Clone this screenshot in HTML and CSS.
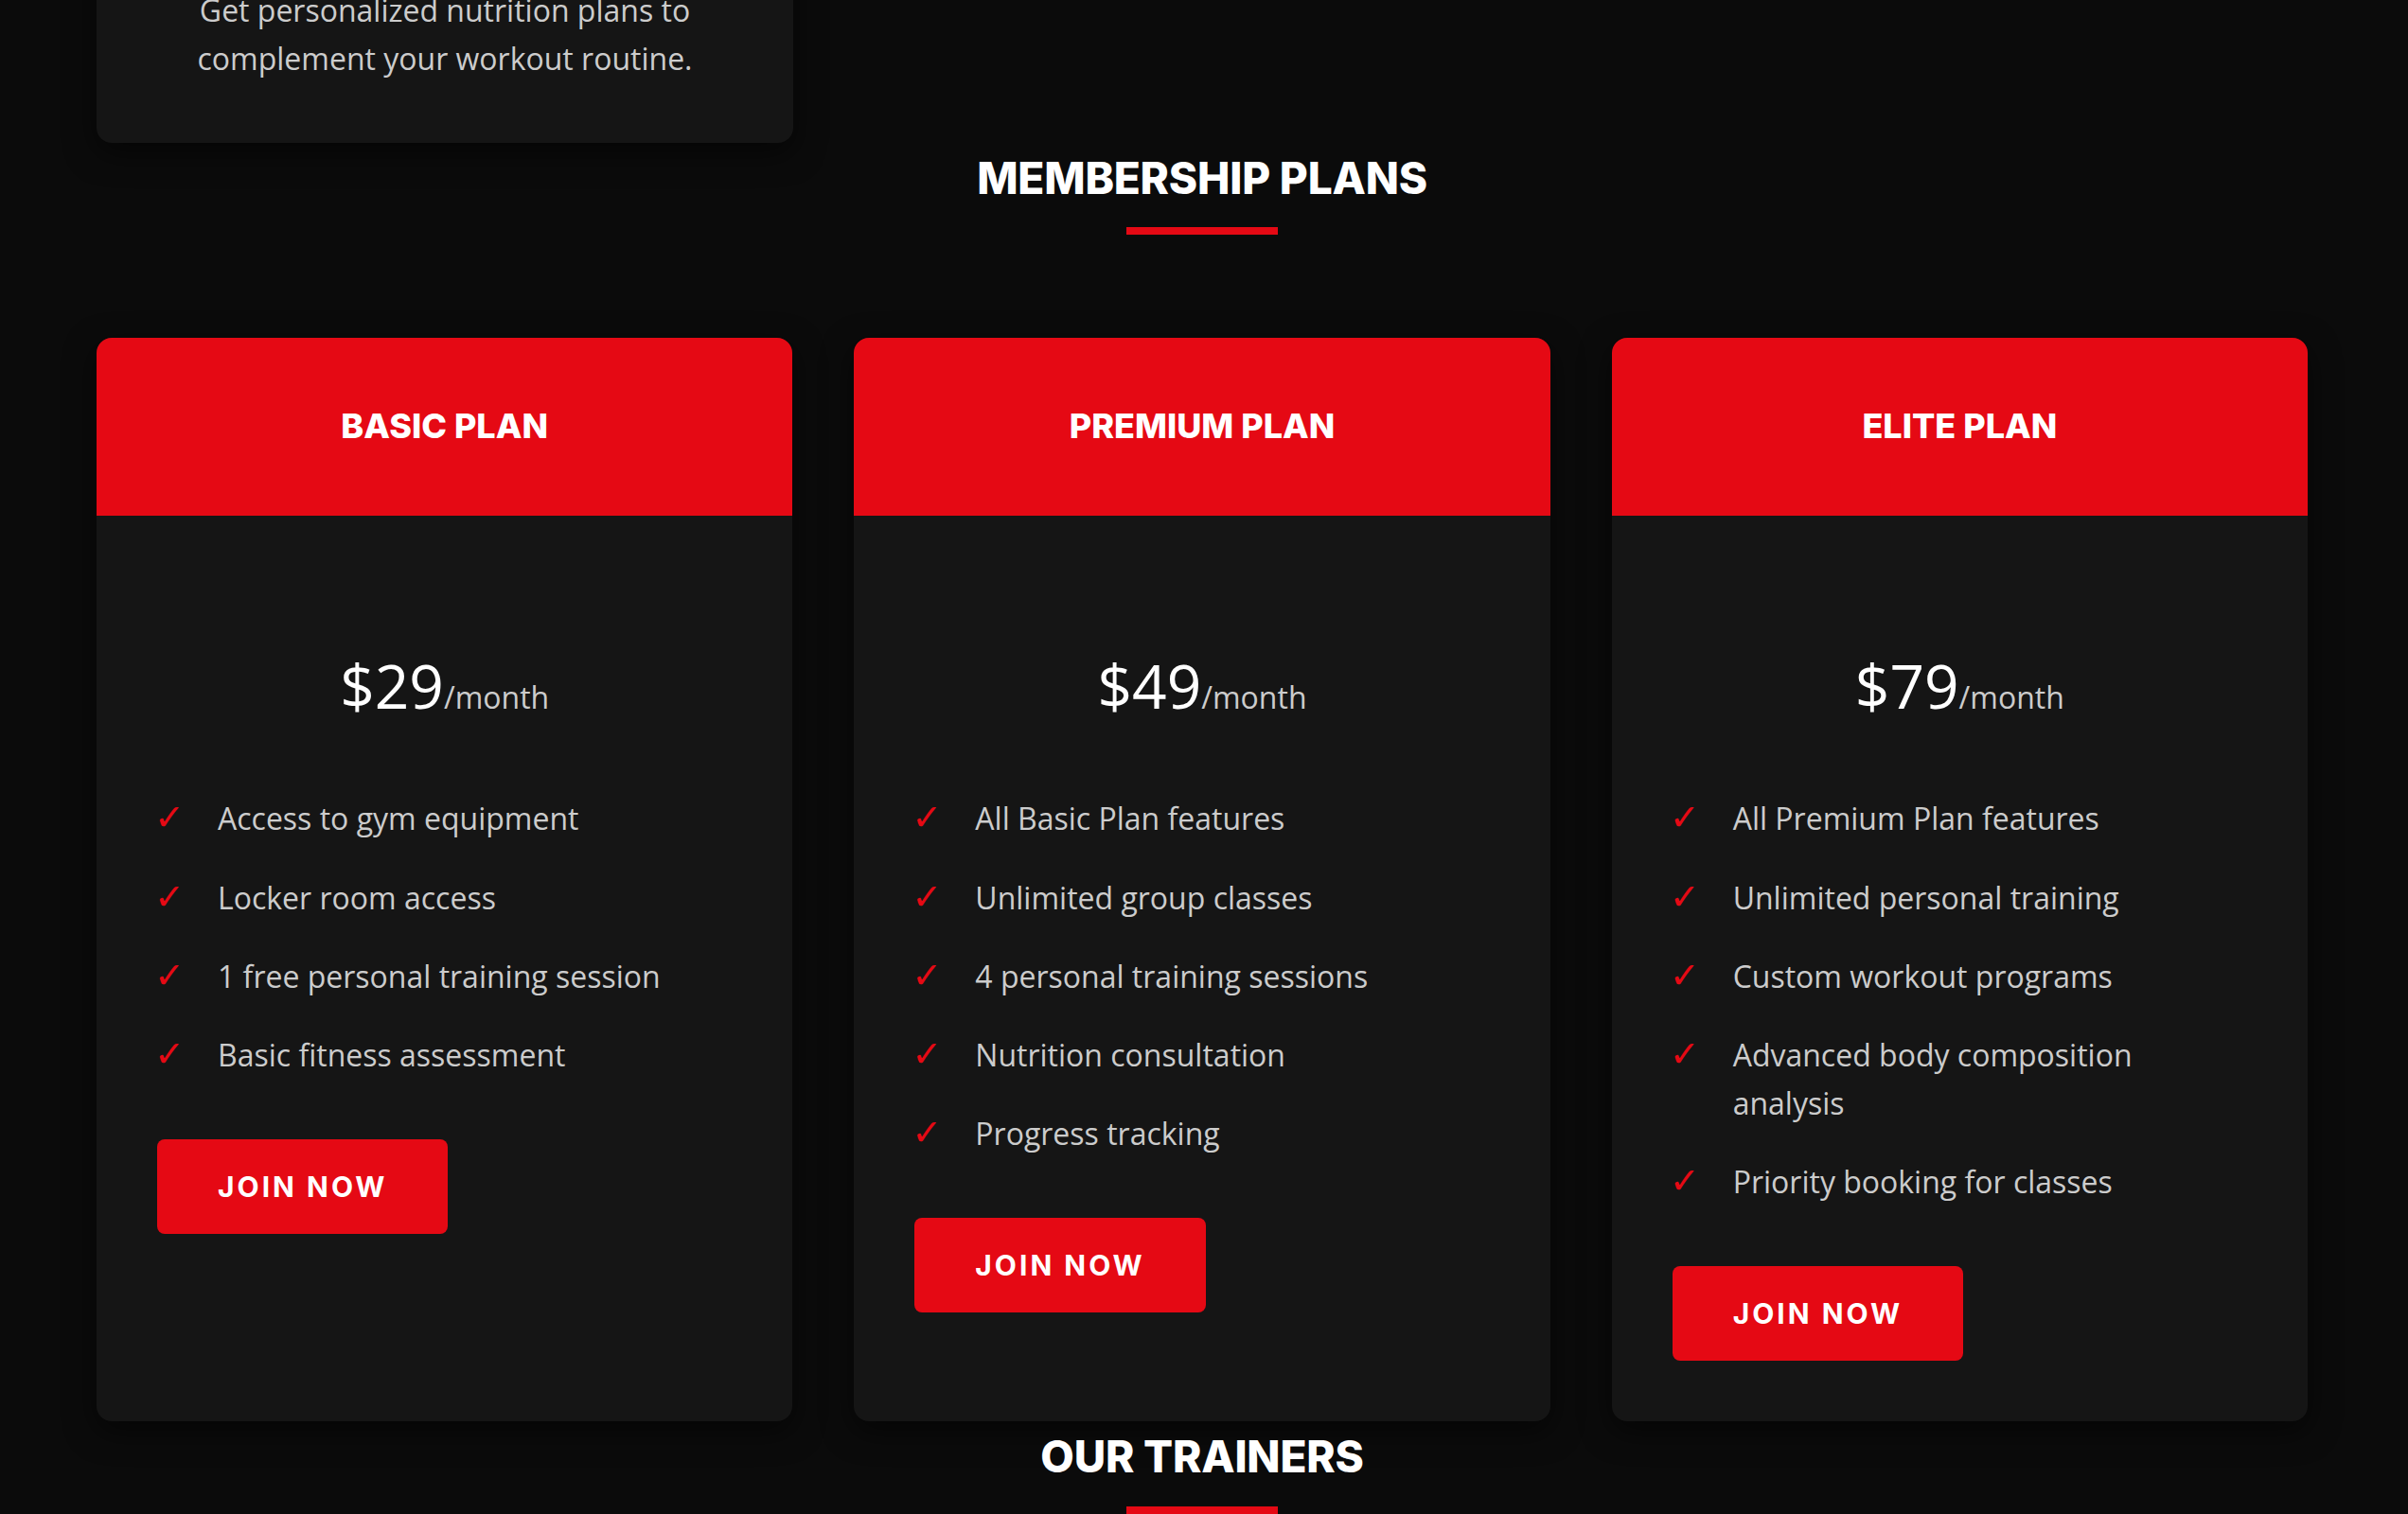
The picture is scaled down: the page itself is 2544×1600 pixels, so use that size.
FILE: index.html
```html
<!DOCTYPE html>
<html lang="en">
<head>
<meta charset="UTF-8">
<title>Membership Plans</title>
<link rel="stylesheet" href="styles.css">
</head>
<body>
  <section class="services">
    <div class="container services-grid">
      <div class="service-card">
        <h3 class="service-title">Nutrition Guidance</h3>
        <p class="service-text">Get personalized nutrition plans to complement your workout routine.</p>
      </div>
    </div>
  </section>

  <section class="plans">
    <div class="container">
      <h2 class="section-title">Membership Plans</h2>
      <div class="plans-grid">
        <div class="plan-card">
          <div class="plan-header"><h3 class="plan-name">Basic Plan</h3></div>
          <div class="plan-body">
            <div class="plan-price">$29<span class="period">/month</span></div>
            <ul class="plan-features">
              <li>Access to gym equipment</li>
              <li>Locker room access</li>
              <li>1 free personal training session</li>
              <li>Basic fitness assessment</li>
            </ul>
            <a class="btn" href="#">Join Now</a>
          </div>
        </div>
        <div class="plan-card">
          <div class="plan-header"><h3 class="plan-name">Premium Plan</h3></div>
          <div class="plan-body">
            <div class="plan-price">$49<span class="period">/month</span></div>
            <ul class="plan-features">
              <li>All Basic Plan features</li>
              <li>Unlimited group classes</li>
              <li>4 personal training sessions</li>
              <li>Nutrition consultation</li>
              <li>Progress tracking</li>
            </ul>
            <a class="btn" href="#">Join Now</a>
          </div>
        </div>
        <div class="plan-card">
          <div class="plan-header"><h3 class="plan-name">Elite Plan</h3></div>
          <div class="plan-body">
            <div class="plan-price">$79<span class="period">/month</span></div>
            <ul class="plan-features">
              <li>All Premium Plan features</li>
              <li>Unlimited personal training</li>
              <li>Custom workout programs</li>
              <li>Advanced body composition analysis</li>
              <li>Priority booking for classes</li>
            </ul>
            <a class="btn" href="#">Join Now</a>
          </div>
        </div>
      </div>
    </div>
  </section>

  <section class="trainers">
    <div class="container">
      <h2 class="section-title">Our Trainers</h2>
    </div>
  </section>
</body>
</html>
```

FILE: styles.css
```css
* {
  box-sizing: border-box;
}

html, body {
  margin: 0;
  padding: 0;
}

body {
  background: #0b0b0b;
  color: #cccccc;
  font-family: "Open Sans", "Noto Sans", sans-serif;
  font-size: 32px;
  line-height: 1.6;
  overflow: hidden;
  height: 1600px;
}

.container {
  padding: 0 106px 0 102px;
}

/* previous section (scrolled partly out of view) */
.services {
  margin-top: -156px;
}

.services-grid {
  display: grid;
  grid-template-columns: repeat(3, 1fr);
  gap: 64px;
}

.service-card {
  background: #151515;
  border-radius: 16px;
  padding: 64px 64px 64px;
  text-align: center;
  box-shadow: 0 10px 32px rgba(0, 0, 0, 0.55);
}

.service-title {
  margin: 0 0 16px;
  font-family: "Inter", sans-serif;
  font-size: 38px;
  line-height: 1.6;
  color: #ffffff;
}

.service-text {
  margin: 0;
}

/* section headings */
.section-title {
  margin: 10px 0 109px;
  text-align: center;
  font-family: "Inter", "Roboto", sans-serif;
  font-weight: 800;
  font-size: 46px;
  letter-spacing: -0.2px;
  line-height: 1.2;
  color: #ffffff;
  text-transform: uppercase;
}

.section-title::after {
  content: "";
  display: block;
  width: 160px;
  height: 8px;
  margin: 24px auto 0;
  background: #e50914;
}

/* plan cards */
.plans-grid {
  display: grid;
  grid-template-columns: repeat(3, 1fr);
  gap: 65px;
  align-items: stretch;
}

.plan-card {
  background: #151515;
  border-radius: 16px;
  overflow: hidden;
  box-shadow: 0 10px 32px rgba(0, 0, 0, 0.55);
  display: flex;
  flex-direction: column;
}

.plan-header {
  background: #e50914;
  padding: 65px 20px;
  text-align: center;
}

.plan-name {
  margin: 0;
  font-family: "Inter", "Roboto", sans-serif;
  font-weight: 800;
  font-size: 36px;
  line-height: 1.6;
  color: #ffffff;
  text-transform: uppercase;
}

.plan-body {
  padding: 64px;
}

.plan-price {
  margin: 65px 0 47px;
  text-align: center;
  font-size: 64px;
  line-height: 1.6;
  color: #ffffff;
}

.period {
  font-size: 32px;
  color: #cccccc;
}

.plan-features {
  list-style: none;
  margin: 0 0 48px;
  padding: 0;
}

.plan-features li {
  position: relative;
  padding: 16px 0 16px 64px;
}

.plan-features li::before {
  content: "\2713";
  position: absolute;
  left: -3px;
  top: 16px;
  color: #e50914;
  font-family: "DejaVu Sans", sans-serif;
  font-size: 38px;
  font-weight: 700;
  line-height: 51px;
}

.btn {
  display: inline-block;
  background: #e50914;
  color: #ffffff;
  text-decoration: none;
  text-transform: uppercase;
  font-family: "Inter", "Roboto", sans-serif;
  font-weight: 700;
  font-size: 30px;
  letter-spacing: 3px;
  line-height: 1.6;
  padding: 26px 64px;
  border-radius: 8px;
}
```
